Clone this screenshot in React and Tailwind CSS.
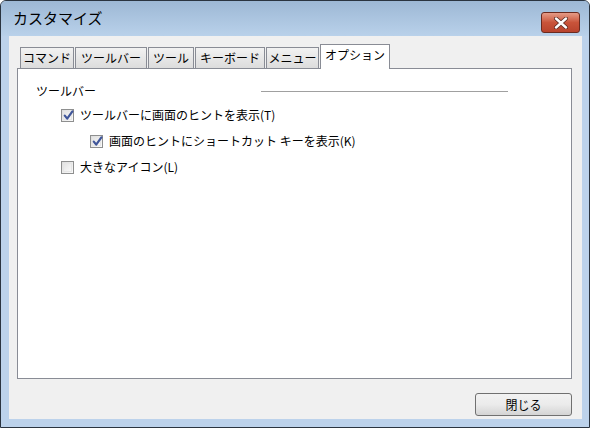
import React from "react";

const font = { fontFamily: '"Noto Sans CJK JP", "Noto Sans", sans-serif' };

const tabs = [
  { label: "コマンド", w: "w-[54px]" },
  { label: "ツールバー", w: "w-[72px]" },
  { label: "ツール", w: "w-[46px]" },
  { label: "キーボード", w: "w-[70px]" },
  { label: "メニュー", w: "w-[53px]" },
];

const CheckBox = ({ checked }) => (
  <div className="relative flex h-[13px] w-[13px] shrink-0 items-center justify-center border border-[#8e8f8f] bg-gradient-to-br from-[#dcdcdc] to-[#fbfbfb]">
    <div className="h-[9px] w-[9px] border border-[#e6e6e6] bg-gradient-to-br from-[#e4e4e4] to-[#f8f8f8]" />
    {checked && (
      <svg width="11" height="11" viewBox="0 0 11 11" className="absolute left-[1px] top-[0px]">
        <path d="M1.8 5.6 L4.2 8.6 L9.4 1.4" fill="none" stroke="#40569a" strokeWidth="2.2" strokeLinecap="round" strokeLinejoin="round" />
      </svg>
    )}
  </div>
);

const Row = ({ checked, label, indent }) => (
  <div className={`flex h-[26px] items-center gap-[6px] ${indent}`}>
    <CheckBox checked={checked} />
    <span className="text-[12px] leading-none text-black">{label}</span>
  </div>
);

export default function App() {
  return (
    <div
      className="flex h-[428px] w-[590px] flex-col overflow-hidden rounded-t-[6px] border border-[#2a3440] bg-[#bcd2eb]"
      style={font}
    >
      <div className="flex h-[35px] shrink-0 items-start justify-between bg-gradient-to-b from-[#9db8d5] to-[#b9d1ea] pl-[12px] pr-[9px]">
        <span className="mt-[9px] text-[15px] leading-none text-black">カスタマイズ</span>
        <div className="mt-[11px] flex h-[21px] w-[39px] items-center justify-center rounded-[3px] border border-[#6a2a1f] bg-gradient-to-b from-[#e59b87] via-[#c9543a] to-[#b8432d]">
          <svg width="14" height="12" viewBox="0 0 14 12">
            <path d="M2 1.5 L12 10.5 M12 1.5 L2 10.5" stroke="#5a2a22" strokeWidth="4" strokeLinecap="round" />
            <path d="M2 1.5 L12 10.5 M12 1.5 L2 10.5" stroke="#ffffff" strokeWidth="2.4" strokeLinecap="round" />
          </svg>
        </div>
      </div>

      <div className="ml-[8px] mr-[7px] mb-[8px] flex flex-1 flex-col bg-[#f0f0f0] pl-[8px] pr-[10px] pt-[7px]">
        <div className="flex h-[25px] items-end pl-[3px]">
          {tabs.map((t) => (
            <div
              key={t.label}
              className={`mr-[1px] flex h-[21px] ${t.w} items-center justify-center border border-b-0 border-[#898c95] bg-gradient-to-b from-[#f2f2f2] to-[#dcdcdc] text-[12px] leading-none text-black`}
            >
              {t.label}
            </div>
          ))}
          <div className="relative z-10 -mb-px flex h-[25px] w-[70px] items-start justify-center border border-b-0 border-[#898c95] bg-white pt-[4px] text-[12px] leading-none text-black">
            オプション
          </div>
        </div>

        <div className="h-[311px] border border-[#898c95] bg-white pl-[18px] pt-[10px]">
          <div className="flex h-[24px] items-center">
            <span className="w-[225px] shrink-0 text-[12px] leading-none text-black">ツールバー</span>
            <div className="h-px w-[247px] shrink-0 bg-[#a0a0a0]" />
          </div>
          <div className="mt-[-1px]">
            <Row checked label="ツールバーに画面のヒントを表示(T)" indent="ml-[25px]" />
            <Row checked label="画面のヒントにショートカット キーを表示(K)" indent="ml-[54px]" />
            <Row checked={false} label="大きなアイコン(L)" indent="ml-[25px]" />
          </div>
        </div>

        <div className="flex justify-end pt-[14px]">
          <div className="flex h-[23px] w-[97px] items-center justify-center rounded-[3px] border border-[#707070] bg-gradient-to-b from-[#f2f2f2] via-[#ebebeb] to-[#d4d4d4] text-[12px] leading-none text-black">
            閉じる
          </div>
        </div>
      </div>
    </div>
  );
}
